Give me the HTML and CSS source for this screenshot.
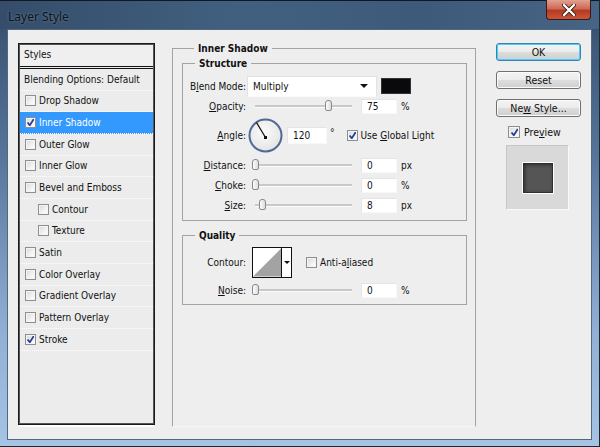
FILE: index.html
```html
<!DOCTYPE html>
<html lang="en">
<head>
  <meta charset="UTF-8" />
  <title>Layer Style</title>
  <link rel="stylesheet" href="styles.css">
</head>
<body>

<div class="window">
  <div class="titlebar">
    <span class="title">Layer Style</span>
    <div class="close-btn">
      <svg width="16" height="12" viewBox="0 0 16 12">
        <path d="M3 1 L13 11 M13 1 L3 11" stroke="#3a1a14" stroke-width="4" stroke-linecap="round"/>
        <path d="M3 1 L13 11 M13 1 L3 11" stroke="#fff" stroke-width="2.4" stroke-linecap="round"/>
      </svg>
    </div>
  </div>

  <div class="client">

    <div class="styles-list">
      <div class="list-head">Styles</div>
      <div class="list-row">Blending Options: Default</div>
      <div class="list-row"><span class="chk"></span>Drop Shadow</div>
      <div class="list-row selected"><span class="chk on"></span>Inner Shadow</div>
      <div class="list-row"><span class="chk"></span>Outer Glow</div>
      <div class="list-row"><span class="chk"></span>Inner Glow</div>
      <div class="list-row"><span class="chk"></span>Bevel and Emboss</div>
      <div class="list-row sub"><span class="chk"></span>Contour</div>
      <div class="list-row sub"><span class="chk"></span>Texture</div>
      <div class="list-row"><span class="chk"></span>Satin</div>
      <div class="list-row"><span class="chk"></span>Color Overlay</div>
      <div class="list-row"><span class="chk"></span>Gradient Overlay</div>
      <div class="list-row"><span class="chk"></span>Pattern Overlay</div>
      <div class="list-row"><span class="chk on"></span>Stroke</div>
    </div>

    <fieldset class="group effect">
      <legend>Inner Shadow</legend>

      <fieldset class="group structure">
        <legend>Structure</legend>

        <div class="row blend-row">
          <span class="lbl">B<u>l</u>end Mode:</span>
          <div class="select">Multiply<span class="arrow"></span></div>
          <span class="swatch"></span>
        </div>

        <div class="row opacity-row">
          <span class="lbl"><u>O</u>pacity:</span>
          <div class="slider"><span class="thumb" style="left: 74px"></span></div>
          <span class="num">75</span>
          <span class="unit">%</span>
        </div>

        <div class="row angle-row">
          <span class="lbl"><u>A</u>ngle:</span>
          <svg class="dial" width="35" height="35" viewBox="0 0 35 35">
            <defs>
              <radialGradient id="dialFill" cx="0.45" cy="0.4" r="0.6">
                <stop offset="0" stop-color="#fbfbfb"/>
                <stop offset="1" stop-color="#e4e4e4"/>
              </radialGradient>
            </defs>
            <circle cx="17.5" cy="17.5" r="16" fill="url(#dialFill)" stroke="#4f6a94" stroke-width="2"/>
            <line x1="17.5" y1="19.5" x2="8.5" y2="4.5" stroke="#111" stroke-width="1.3"/>
            <rect x="16" y="18" width="3" height="3" fill="#111"/>
          </svg>
          <span class="num wide">120</span>
          <span class="unit deg">&deg;</span>
          <span class="chk on global"></span>
          <span class="chk-label">Use <u>G</u>lobal Light</span>
        </div>

        <div class="row">
          <span class="lbl"><u>D</u>istance:</span>
          <div class="slider"><span class="thumb" style="left: 1px"></span></div>
          <span class="num">0</span>
          <span class="unit">px</span>
        </div>

        <div class="row">
          <span class="lbl"><u>C</u>hoke:</span>
          <div class="slider"><span class="thumb" style="left: 1px"></span></div>
          <span class="num">0</span>
          <span class="unit">%</span>
        </div>

        <div class="row">
          <span class="lbl"><u>S</u>ize:</span>
          <div class="slider"><span class="thumb" style="left: 8px"></span></div>
          <span class="num">8</span>
          <span class="unit">px</span>
        </div>
      </fieldset>

      <fieldset class="group quality">
        <legend>Quality</legend>

        <div class="row contour-row">
          <span class="lbl">Contour:</span>
          <div class="contour">
            <svg width="29" height="29" viewBox="0 0 29 29">
              <polygon points="0,29 29,0 29,29" fill="#a3a3a3"/>
            </svg>
            <span class="contour-drop"><span class="arrow small"></span></span>
          </div>
          <span class="chk aa"></span>
          <span class="chk-label">Anti-a<u>l</u>iased</span>
        </div>

        <div class="row noise-row">
          <span class="lbl"><u>N</u>oise:</span>
          <div class="slider"><span class="thumb" style="left: 1px"></span></div>
          <span class="num">0</span>
          <span class="unit">%</span>
        </div>
      </fieldset>
    </fieldset>

    <div class="actions">
      <div class="btn default"><span>OK</span></div>
      <div class="btn"><span>Reset</span></div>
      <div class="btn"><span>Ne<u>w</u> Style...</span></div>
      <div class="preview-toggle">
        <span class="chk on big"></span>
        <span>Pre<u>v</u>iew</span>
      </div>
      <div class="preview-box">
        <div class="preview-swatch"></div>
      </div>
    </div>

  </div>
</div>

</body>
</html>
```

FILE: styles.css
```css
* {
  box-sizing: border-box;
}

body {
  margin: 0;
  background: #1d2733;
  font-family: "DejaVu Sans Condensed", "DejaVu Sans", sans-serif;
  font-size: 10px;
  color: #111;
}

u {
  text-decoration: underline;
  text-underline-offset: 1px;
}

/* window frame */

.window {
  width: 600px;
  height: 447px;
  display: flex;
  flex-direction: column;
  padding: 0 7px 6px 7px;
  background: linear-gradient(to bottom, #2c3f57 0, #3d5878 40px, #56769b 160px, #8fb0d4 330px, #a6c4e4 447px);
  border-right: 1px solid #1c2836;
  border-bottom: 1px solid #1c2836;
}

.titlebar {
  height: 29px;
  flex: none;
  display: flex;
  align-items: flex-start;
  justify-content: space-between;
  margin: 0 -7px 0 -7px;
  padding-left: 8px;
  border-top: 1px solid #101820;
  background: linear-gradient(to right, #354d6b, #41607f 40%, #3e5a7a 70%, #466485);
}

.title {
  margin-top: 7px;
  font-family: "Noto Sans", "Open Sans", sans-serif;
  font-size: 12px;
  color: #111318;
  text-shadow: 0 0 3px rgba(120, 145, 175, 0.8);
}

.close-btn {
  width: 45px;
  height: 20px;
  margin: -1px 8px 0 0;
  display: flex;
  align-items: center;
  justify-content: center;
  border: 1px solid #3b1a16;
  border-top: none;
  border-radius: 0 0 4px 4px;
  background: linear-gradient(to bottom, #e0a193 0, #cf6a55 45%, #b53a22 55%, #c9563a 100%);
}

.client {
  flex: 1;
  display: flex;
  align-items: flex-start;
  padding: 13px 10px 0 10px;
  background: #eeeeee;
  border: 1px solid #55677d;
}

/* styles list */

.styles-list {
  width: 137px;
  height: 382px;
  flex: none;
  border: 1px solid #1a1a1a;
  box-shadow: inset 0 0 0 1px #555, 0 3px 0 -1px #fff;
  padding: 1px;
  background: #ececec;
}

.list-head {
  height: 24px;
  padding: 4px 0 0 4px;
  border-bottom: 3px double #111;
  background: #efefef;
}

.list-row {
  height: 21.67px;
  display: flex;
  align-items: center;
  padding-left: 4px;
  border-bottom: 1px dotted #fff;
  white-space: nowrap;
}

.list-row .chk {
  margin: 0 3px 0 1px;
}

.list-row.sub {
  padding-left: 17px;
}

.list-row.selected {
  background: #3399ff;
  color: #fff;
}

/* checkbox */

.chk {
  display: inline-block;
  flex: none;
  width: 11px;
  height: 11px;
  border: 1px solid #8c8e90;
  background: linear-gradient(135deg, #d8d8d8, #f7f7f7 70%, #fff);
  box-shadow: inset 0 0 0 1px #f4f4f4;
}

.chk.on {
  background: url("data:image/svg+xml;utf8,<svg xmlns='http://www.w3.org/2000/svg' width='9' height='9'><path d='M1.5 4.5 L3.8 7.2 L7.8 1' fill='none' stroke='%2324409a' stroke-width='1.8'/></svg>") center no-repeat, linear-gradient(135deg, #d8d8d8, #f7f7f7 70%, #fff);
}

.chk.big {
  width: 12px;
  height: 12px;
}

.chk-label {
  margin-left: 3px;
  white-space: nowrap;
}

/* group boxes */

.group {
  margin: 0;
  padding: 0;
  min-width: 0;
  border: 1px solid #a3a3a3;
}

.group > legend {
  margin-left: 12px;
  padding: 0 4px;
  font-weight: bold;
  line-height: 13px;
}

.effect {
  width: 304px;
  height: 385px;
  flex: none;
  margin: -1px 20px 0 17px;
  padding: 0 8px 0 9px;
  border-bottom: 1px dotted #fff;
}

.structure {
  margin-top: 2px;
  padding: 5px 0 5px 0;
}

.quality {
  margin-top: 8px;
  padding: 4px 0 5px 0;
}

.row {
  display: flex;
  align-items: center;
  height: 20px;
}

.lbl {
  width: 64px;
  flex: none;
  padding-right: 1px;
  text-align: right;
  white-space: nowrap;
}

.blend-row {
  height: 22px;
}

.opacity-row {
  height: 18px;
}

.angle-row {
  height: 40px;
}

.contour-row {
  height: 33px;
}

.noise-row {
  height: 18px;
  margin-top: 2px;
}

/* controls */

.select {
  width: 130px;
  height: 21px;
  display: flex;
  align-items: center;
  justify-content: space-between;
  padding: 0 8px 0 5px;
  background: #fff;
  border: 1px solid #e2e2e2;
  border-bottom-color: #fafafa;
}

.arrow {
  width: 0;
  height: 0;
  border-left: 4px solid transparent;
  border-right: 4px solid transparent;
  border-top: 4px solid #111;
}

.arrow.small {
  border-left-width: 3px;
  border-right-width: 3px;
  border-top-width: 3px;
}

.swatch {
  width: 30px;
  height: 16px;
  margin-left: 4px;
  background: #0a0a0c;
  border: 1px solid #333;
}

.slider {
  position: relative;
  width: 101px;
  height: 12px;
  margin-left: 4px;
  flex: none;
}

.slider::before {
  content: "";
  position: absolute;
  left: 4px;
  right: 0;
  top: 5px;
  height: 2px;
  background: #c9c9c9;
  border-bottom: 1px solid #fbfbfb;
}

.thumb {
  position: absolute;
  top: 0;
  width: 7px;
  height: 11px;
  border: 1px solid #8a8a8a;
  border-radius: 3px 3px 2px 2px;
  background: linear-gradient(to right, #fdfdfd, #dcdcdc);
}

.num {
  width: 36px;
  height: 15px;
  margin-left: 9px;
  padding: 1px 0 0 5px;
  background: #fff;
  border: 1px solid #e4e4e4;
  border-right-color: #f8f8f8;
  border-bottom-color: #f8f8f8;
  line-height: 12px;
}

.num.wide {
  width: 40px;
  height: 17px;
  margin-left: 4px;
  padding-top: 2px;
}

.unit {
  margin-left: 4px;
}

.dial {
  flex: none;
  margin-left: 1px;
}

.deg {
  margin: -6px 0 0 3px;
}

.global {
  margin-left: 12px;
}

.contour {
  width: 40px;
  height: 31px;
  margin-left: 5px;
  display: flex;
  border: 1px solid #111;
  background: #fff;
}

.contour svg {
  display: block;
}

.contour-drop {
  width: 10px;
  display: flex;
  align-items: center;
  justify-content: center;
  border-left: 1px solid #111;
}

.aa {
  margin-left: 14px;
}

/* buttons column */

.actions {
  width: 85px;
  flex: none;
  display: flex;
  flex-direction: column;
}

.btn {
  height: 18px;
  margin-bottom: 10px;
  display: flex;
  align-items: center;
  justify-content: center;
  font-size: 10.5px;
  white-space: nowrap;
  border: 1px solid #707070;
  border-radius: 3px;
  background: linear-gradient(to bottom, #f4f4f4 0, #ebebeb 50%, #dddddd 51%, #cfcfcf 100%);
  box-shadow: inset 0 0 0 1px #fbfbfb;
}

.btn.default {
  border-color: #3c7fb1;
  box-shadow: inset 0 0 0 1px #48d0f8;
}

.preview-toggle {
  display: flex;
  align-items: center;
  gap: 4px;
  margin: -1px 0 0 12px;
  font-size: 10.5px;
}

.preview-box {
  width: 63px;
  height: 65px;
  margin: 7px 0 0 10px;
  display: flex;
  align-items: center;
  justify-content: center;
  border: 1px solid #c6c6c6;
  border-right-color: #fafafa;
  border-bottom-color: #fafafa;
  background: #d9d9d9;
}

.preview-swatch {
  width: 32px;
  height: 32px;
  border: 1px solid #fff;
  background: #555;
  box-shadow: inset 0 0 0 1px #2e2e2e, inset 1px 1px 4px #1a1a1a;
}
```
